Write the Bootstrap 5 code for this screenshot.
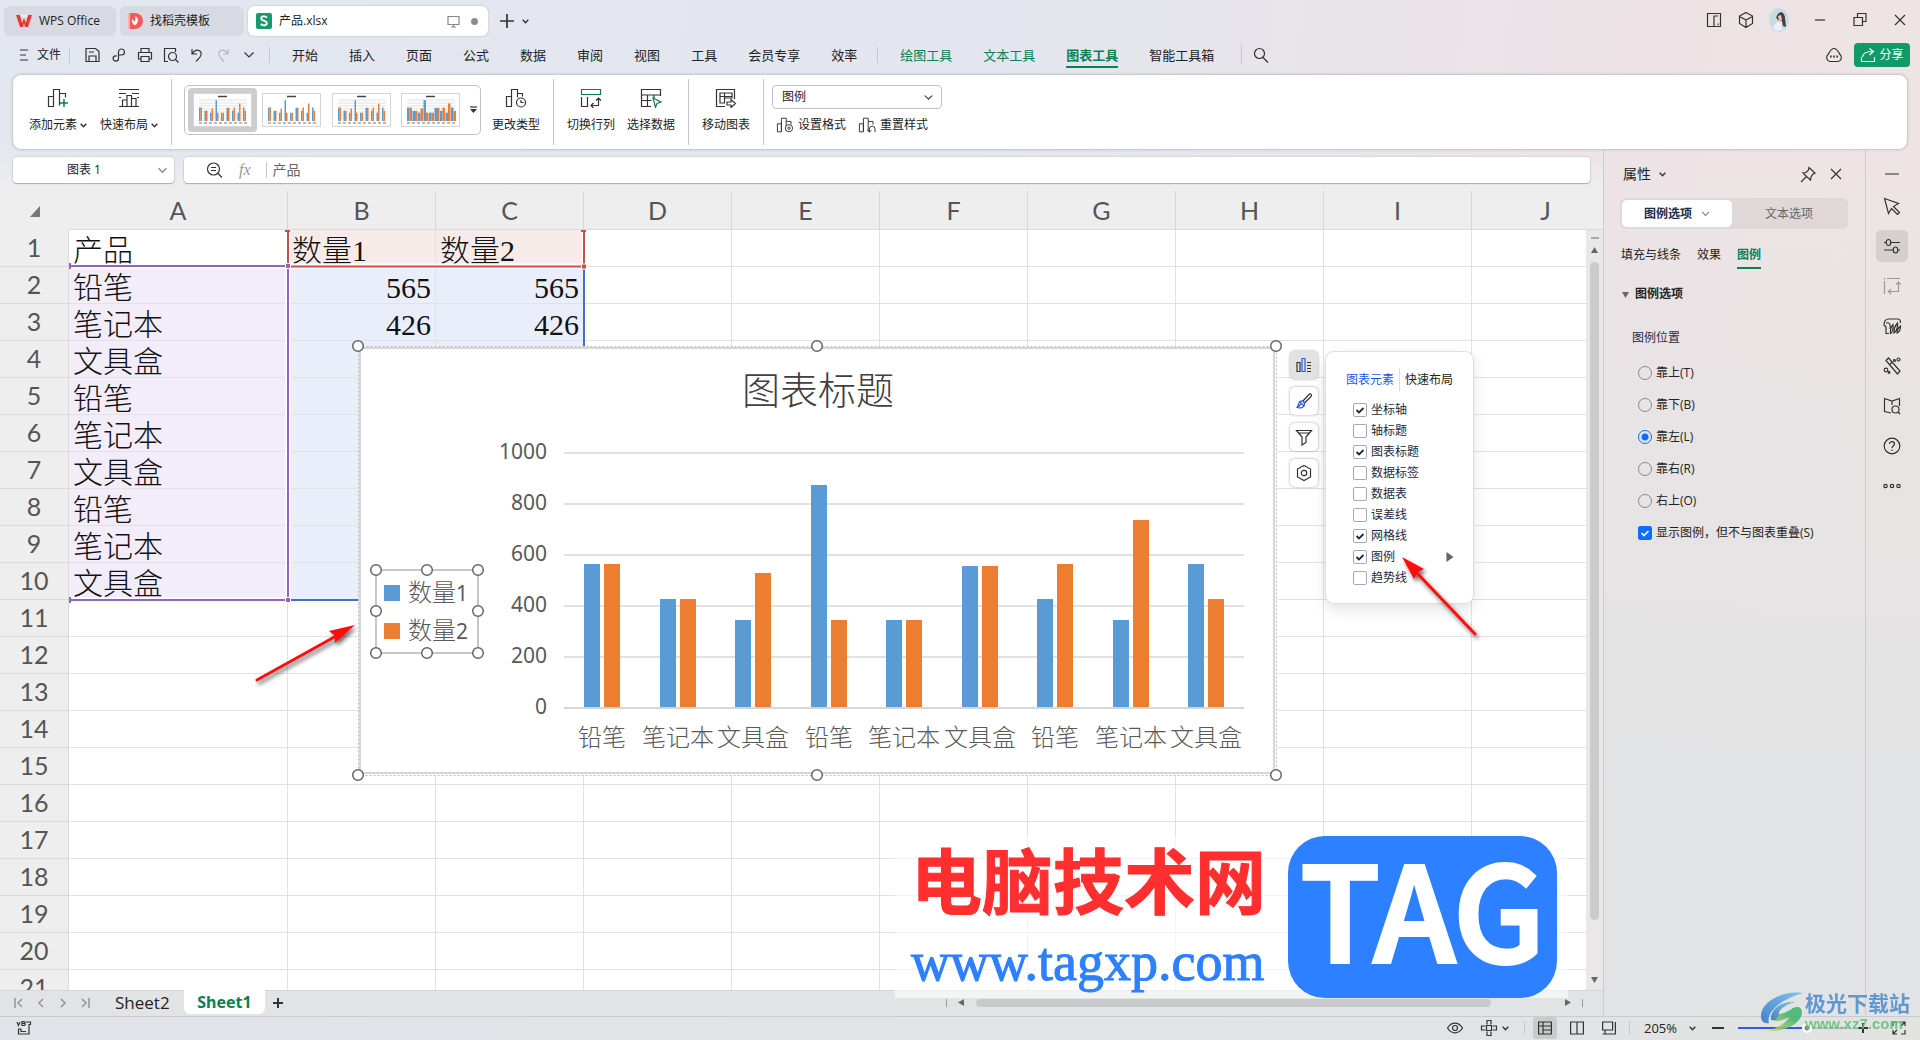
<!DOCTYPE html>
<html lang="zh-CN">
<head>
<meta charset="utf-8">
<meta name="viewport" content="width=device-width, initial-scale=1">
<title>产品.xlsx - WPS Office</title>
<link href="https://cdn.jsdelivr.net/npm/bootstrap@5.3.0/dist/css/bootstrap.min.css" rel="stylesheet">
<style>
  body{height:100vh;overflow:hidden;font-family:"Open Sans","Noto Sans CJK SC",sans-serif;font-size:12px;line-height:16px;color:#222;
    background:linear-gradient(180deg,rgba(226,227,228,0) 15%,#e2e3e4 75%),linear-gradient(95deg,#e3e7ef 0,#e3e6ee 50%,#ece3e7 78%,#eee4e3 100%)}
  button{border:0;background:none;padding:0;color:inherit;font:inherit;line-height:inherit}
  svg{display:block;fill:none;stroke:#333;stroke-width:1.2;flex:none}
  a{color:inherit;text-decoration:none}
  .ic{width:18px;height:18px}
  .caret{width:7px;height:5px;stroke-width:1.4}
  .grn{color:#0a8055}
  .vrule{width:1px;background:#c6c8cd;flex:none}

  .titlebar{height:38px;padding:6px 11px 0 4px;gap:4px}
  .doctab{height:30px;border-radius:6px;background:#d7dae2;padding:0 10px 0 12px;gap:7px}
  .doctab.on{background:#fff;box-shadow:0 0 2px #a9adb8}
  .t1{width:112px}.t2{width:124px}.t3{width:240px}
  .dotmark{width:7px;height:7px;border-radius:50%;background:#8d8d90}
  .face{width:20px;height:24px}
  .winctl{gap:22px;height:28px}
  .winapps{gap:14px}

  .menubar{height:37px;padding:0 10px 3px 19px}
  .quick{gap:8px}
  .tabs{gap:31px;font-size:13px;line-height:18px;padding-left:22px}
  .tabs .on{font-weight:700;border-bottom:2px solid #0a8055;padding-top:4px;padding-bottom:2px}
  .share{width:56px;height:24px;border-radius:4px;background:#0f9a68;color:#fff;gap:3px}
  .share svg{stroke:#fff}

  .ribbon{height:74px;margin:0 13px;background:#fff;border-radius:8px;box-shadow:0 0 3px rgba(90,95,110,.55);padding:4px 0}
  .tool{gap:9px;padding-top:9px;height:66px}
  .tool svg.big{width:22px;height:20px}
  .tool .lab{gap:3px}
  .split{margin:0 13px}
  .gallery{width:297px;height:50px;border:1px solid #bfc1c4;border-radius:5px;padding:2px 3px;gap:1px;margin:6px 11px 0 12px}
  .thumb{width:69px;height:44px;border-radius:4px}
  .thumb.on{background:#cdcdcd}
  .thumb svg{width:57px;height:32px;background:#fff;stroke:none;outline:1px solid #d5d5d5}
  .pick{width:170px;height:24px;font-size:12px;line-height:16px;padding:0 0 0 9px;border:1px solid #bfc1c4;border-radius:4px;background-size:9px;background-position:right 8px center;color:#222}

  .work{min-width:0}
  .fxrow{flex:none;height:42px;padding:8px 13px;gap:10px;background:linear-gradient(rgba(238,238,238,0),#eee)}
  .box{background:#fff;border-radius:4px;box-shadow:0 1px 1px #aab0b3,0 0 1px 1px #d3d6da}
  .namebox{width:161px;padding:0 6px 0 8px}
  .namebox input,.fx input{border:0;background:none;min-width:0;padding:0;outline:0}
  .namebox input{text-align:center;width:126px;color:#222}
  .fx{padding-left:21px}
  .fx input{font-size:14px;color:#666;padding-left:6px}
  .fxmark{font:italic 16px/20px "Liberation Serif",serif;color:#999}

  .sheet-table{table-layout:fixed;width:1620px;border-collapse:separate;border-spacing:0;background:#fff}
  .sheet-table th{font:400 25px/34px Lato,sans-serif;color:#555;background:#eee;text-align:center;padding:0 0 2px;border-right:1px solid #dadada;border-bottom:1px solid #dadada}
  .sheet-table thead th{height:39px;padding:0;border-right-color:#d6d6d6}
  .sheet-table thead th:first-child{border-color:transparent}
  .sheet-table td{height:37px;padding:6px 4px 0;border-right:1px solid #e1e2e2;border-bottom:1px solid #e1e2e2;font:300 30px/30px "Liberation Serif","Noto Sans CJK SC",serif;color:#111;white-space:nowrap}
  .ra{background:#f2edf8}.rb{background:#f7ebea}.rc{background:#e9eefa}
  .corner{width:11px;height:11px;margin:2px 0 0 30px;stroke:none;fill:#777}
  .viewport{min-width:0}
  .over{position:absolute;pointer-events:none;overflow:visible}
  .ranges{left:60px;top:30px}
  .plot{left:350px;top:148px}
  .plot text{stroke:none;fill:#595959;font-family:"Noto Sans","Noto Sans CJK SC",sans-serif;font-size:21px}
  .plot .cjk{font-size:24px;font-weight:300}
  .plot .ttl{font-size:38px;fill:#404040;font-weight:300}
  .knob{fill:#fff;stroke:#666;stroke-width:1.5}

  .side{position:absolute;left:1290px;top:160px;gap:8px}
  .side button{width:28px;height:28px;border-radius:5px;background:#fff;box-shadow:0 0 3px rgba(0,0,0,.35)}
  .side .on{background:#e2e2e2}
  .popup{position:absolute;left:1326px;top:161px;width:147px;height:251px;border-radius:8px;background:#fff;box-shadow:0 0 1px 1px #dcdcdc,0 6px 16px rgba(0,0,0,.12);padding:16px 0 0 20px}
  .pophead{gap:5px;height:24px}
  .poplist{padding:7px 0 0 7px}
  .poplist label{height:21px;gap:4px;color:#222a40}
  .poplist svg{width:10px;height:10px;margin:0 18px 0 auto}
  .tick{appearance:none;width:14px;height:14px;margin:0;border:1px solid #a5a8b0;border-radius:2px;background:#fff center/10px no-repeat}
  .tick:checked{background-image:url("data:image/svg+xml,%3Csvg xmlns='http://www.w3.org/2000/svg' viewBox='0 0 10 10'%3E%3Cpath d='M1.5 5l2.5 2.5 4.5-4.5' fill='none' stroke='%23222a40' stroke-width='1.8'/%3E%3C/svg%3E")}
  .tick.blue:checked{background-color:#0d6efd;border-color:#0d6efd;background-image:url("data:image/svg+xml,%3Csvg xmlns='http://www.w3.org/2000/svg' viewBox='0 0 10 10'%3E%3Cpath d='M1.5 5l2.5 2.5 4.5-4.5' fill='none' stroke='white' stroke-width='1.6'/%3E%3C/svg%3E")}

  .vscroll{width:17px;margin-top:39px;padding:7px 0;background:#e9e7e8}
  .headfill{position:absolute;right:0;top:0;width:17px;height:39px;background:#eee;border-bottom:1px solid #dadada}
  .vthumb{width:9px;height:658px;border-radius:5px;background:#cbcbcb;flex:0 1 658px}
  .tri{width:7px;height:7px;fill:#666;stroke:none}

  .sheetbar{flex:none;height:26px;border-top:1px solid #d3d5d7;padding:0 0 2px 14px}
  .sheetbar .nav4{gap:12px;width:101px}
  .sheetbar .nav4 svg{width:10px;height:12px;stroke:#999;stroke-width:1.6}
  .stab{font-size:17px;line-height:22px;width:69px;text-align:left}
  .stab.on{width:81px;height:24px;text-align:center;background:#fff;border-radius:0 0 6px 6px;margin-top:-1px;font-weight:700;font-family:"Noto Sans",sans-serif;font-size:16px}
  .hscroll{width:637px;gap:11px;margin-right:20px}
  .hscroll .vrule{height:8px;background:#999}
  .hthumb{height:8px;border-radius:4px;background:#c8cacb;width:515px}

  .panel{width:262px;border-left:1px solid #cfcbcd;padding:15px 17px 0 16px}
  .seg{height:31px;border-radius:6px;background:#e0d8d8;padding:2px;margin-top:14px}
  .seg button{flex:1}
  .seg .on{flex:0 0 110px;background:#fff;border-radius:5px;font-weight:700;color:#222a45;gap:9px}
  .ptabs{gap:16px;margin-top:18px;padding-left:1px}
  .ptabs .on{font-weight:700;border-bottom:2px solid #0a8055;height:22px}
  .radios{gap:16px;padding:19px 0 0 18px}
  .radios label{gap:4px;height:16px}
  .radios input[type=radio]{appearance:none;width:14px;height:14px;margin:0;border:1px solid #888;border-radius:50%}
  .radios input[type=radio]:checked{border-color:#0d6efd;background:radial-gradient(#0d6efd 3px,transparent 4px)}
  .rail{width:55px;border-left:1px solid #cfcbcd;padding:24px 2px 0 0}
  .rail button{width:32px;height:32px;border-radius:5px;margin-bottom:8px}
  .rail .on{background:#d6cfcf}
  .railbar{width:14px;height:2px;background:#888;margin-bottom:15px;flex:none}

  .statusbar{flex:none;height:24px;border-top:1px solid #c9cbcd;padding:0 14px 1px 16px;background:linear-gradient(90deg,#e2e4ea,#e1e3e5 75%,#e2e2e1)}
  .st{width:24px;height:22px;border-radius:3px}
  .st.on{background:#c9cbcb}
  .statusbar .vrule{height:14px}
  .zoomer{appearance:none;width:113px;height:14px;background:linear-gradient(90deg,#2e5be0 70px,#b9bbbd 70px) center/100% 2px no-repeat}
  .zoomer::-webkit-slider-thumb{appearance:none;width:10px;height:10px;border-radius:50%;background:radial-gradient(#888 2px,#fff 3px)}

  .tagmark{position:absolute;left:895px;bottom:18px;width:673px;height:162px;background:rgba(255,255,255,.6);padding-left:16px;padding-right:11px}
  .tagred{font:700 71px/82px "Noto Sans CJK SC",sans-serif;color:#ff2f2f;-webkit-text-stroke:1px #ff2f2f}
  .tagurl{font:400 54px/60px "Liberation Serif",serif;color:#2d80ff;-webkit-text-stroke:1px #2d80ff;margin-top:14px}
  .tagbox{width:269px;height:162px;border-radius:37px;background:#2d80ff;color:#fff;font:500 130px/138px "Noto Sans CJK SC",sans-serif;-webkit-text-stroke:4px #fff;text-align:center}
  .xzmark{position:absolute;right:10px;bottom:7px;gap:2px;opacity:.85}
  .xz1{font:700 21px/25px "Noto Sans CJK SC",sans-serif;color:#4a8cd0}
  .xz2{font:700 15px/18px "Liberation Sans",sans-serif;color:#5fbf7a}
</style>
<script src="https://cdn.jsdelivr.net/npm/bootstrap@5.3.0/dist/js/bootstrap.bundle.min.js"></script>
</head>
<body class="d-flex flex-column position-relative">
<svg width="0" height="0" class="position-absolute">
  <symbol id="down" viewBox="0 0 7 5"><path d="M.7.8l2.8 3 2.8-3"/></symbol>
  <symbol id="x" viewBox="0 0 18 18"><path d="M4 4l10 10M14 4L4 14"/></symbol>
  <symbol id="bars" viewBox="0 0 22 20"><path d="M1.500 8.500h5v10h-5zM6.500 18V1.500h6v16M12.500 5.500h6v4"/></symbol>
</svg>

<header class="flex-shrink-0">
  <div class="titlebar d-flex align-items-start">
    <button class="doctab t1 d-flex align-items-center"><svg width="16" height="14" viewBox="0 0 16 14"><path fill="#e8392c" stroke="none" d="M0 1h4l2 8 2-5 2 5 2-8h4l-4 12h-3L8 9l-1 4H4z"/><path fill="#fff" stroke="none" d="M4 1h8l-.6 2H5.200z" opacity=".6"/></svg>WPS Office</button>
    <button class="doctab t2 d-flex align-items-center ps-2"><svg width="15" height="16" viewBox="0 0 15 16"><path d="M0 0h7a8 8 0 0 1 0 16H0z" fill="#f15b5b" stroke="none"/><path d="M0 0h2v16H0z" fill="#ffaea8" stroke="none"/><path d="M7.500 3c3 3 3 5 1 8-1 2-3 1-4-1-1-2-.5-3 0-4l2 3c1-2 1-4 1-6z" fill="#fff" stroke="none"/></svg>找稻壳模板</button>
    <div class="doctab t3 on d-flex align-items-center ps-2"><svg width="16" height="16" viewBox="0 0 16 16"><rect width="16" height="16" rx="2" fill="#169a69" stroke="none"/><path d="M11 4.600C9 2.800 5 3 5.200 5.600c.2 2.600 5.600 1.600 5.600 4.600 0 2.500-4 2.700-6.100.8" stroke="#fff" stroke-width="1.800"/></svg><span>产品.xlsx</span>
      <svg class="ms-auto" width="13" height="13" viewBox="0 0 13 13" style="stroke:#888"><path d="M1 1.500h11v8H1zM4 12h5M6.500 10v2"/></svg><span class="dotmark ms-1"></span></div>
    <div class="d-flex align-items-center gap-2 ps-2" style="height:30px"><button aria-label="新建"><svg width="14" height="14" viewBox="0 0 14 14"><path d="M7 0v14M0 7h14" stroke-width="1.700"/></svg></button><svg class="caret"><use href="#down"/></svg></div>
    <div class="winctl d-flex align-items-center ms-auto">
      <div class="winapps d-flex align-items-center">
      <svg class="ic" viewBox="0 0 18 18"><path d="M2.500 2.500h13v13h-13zM9 15V5h4M9 5h3.500v0M13 12.500V14"/></svg>
      <svg class="ic" viewBox="0 0 18 18"><path d="M9 1.500l6.500 3.500v7.500L9 16.500l-6.500-4V5zM2.500 5.500L9 9l6.500-3.500M9 9v7"/></svg>
      <svg class="face" viewBox="0 0 20 24"><g stroke="none"><ellipse cx="10" cy="12" rx="10" ry="12" fill="#c9dce6"/><path d="M9 6c3-4 7-1 7 4l1 9-3-1-1-5-4-1c-3-2-1-5 0-6z" fill="#4a3b42"/><path d="M9 8l3-1 1 5-3 1z" fill="#ecc3b4"/><path d="M4 20c2-6 6-7 8-5l1 7-5 1z" fill="#e9f3f6"/></g></svg>
      </div>
      <button aria-label="最小化"><svg class="ic" viewBox="0 0 18 18"><path d="M4 9h10"/></svg></button>
      <button aria-label="还原"><svg class="ic" viewBox="0 0 18 18"><path d="M3 6.500h8.500v8H3zM6.500 6.500v-4H15v8h-3.500"/></svg></button>
      <button aria-label="关闭"><svg class="ic"><use href="#x"/></svg></button>
    </div>
  </div>

  <div class="menubar d-flex align-items-center">
    <button class="d-flex align-items-center gap-2"><svg width="10" height="12" viewBox="0 0 10 12"><path d="M1 1h8M1 6h6M1 11h8"/></svg>文件</button>
    <span class="vrule ms-2 me-2 align-self-center" style="height:16px"></span>
    <div class="quick d-flex align-items-center" style="padding-left:6px">
      <svg class="ic" viewBox="0 0 18 18"><path d="M2 2.500h9.500l3.500 3V15.500H2zM5 15v-5h7v5M5 6h5"/></svg>
      <svg class="ic" viewBox="0 0 18 18"><path d="M8 9h3.500a3 3 0 1 0-3-3v6.500a2.700 2.700 0 1 1-2.700-2.700h1"/></svg>
      <svg class="ic" viewBox="0 0 18 18"><path d="M5 6V2.500h8V6M5 13H2.500V6.500h13V13H13M5 10.500h8v5H5z"/></svg>
      <svg class="ic" viewBox="0 0 18 18"><path d="M6 15.500H2.500v-13h11V6"/><circle cx="10.500" cy="10.500" r="4"/><path d="M13.500 13.500l3 3"/></svg>
      <svg class="ic" viewBox="0 0 18 18"><path d="M4 3v5h5M4.500 7.500C8 2 14 4 13 9c-.5 2.500-3 4-5 6.500"/></svg>
      <svg class="ic" viewBox="0 0 18 18" style="stroke:#b5b8be"><path d="M14 3v5H9M13.500 7.500C10 2 4 4 5 9c.5 2.500 3 4 5 6.500"/></svg>
      <svg class="ic" viewBox="0 0 18 18"><path d="M4.500 6.500L9 11l4.500-4.500"/></svg>
    </div>
    <span class="vrule" style="height:16px;margin-left:11px"></span>
    <nav class="tabs d-flex align-items-center">
      <a href="#">开始</a><a href="#">插入</a><a href="#">页面</a><a href="#">公式</a><a href="#">数据</a><a href="#">审阅</a><a href="#">视图</a><a href="#">工具</a><a href="#">会员专享</a><a href="#">效率</a>
    </nav>
    <span class="vrule" style="height:16px;margin-left:20px"></span>
    <nav class="tabs d-flex align-items-center"><a href="#" class="grn">绘图工具</a><a href="#" class="grn">文本工具</a><a href="#" class="grn on">图表工具</a><a href="#">智能工具箱</a></nav>
    <span class="vrule" style="height:20px;margin-left:27px"></span>
    <svg class="ic" viewBox="0 0 18 18" style="margin-left:9px"><circle cx="8.500" cy="7.500" r="5"/><path d="M12 11.500l5 5"/></svg>
    <svg class="ic ms-auto" viewBox="0 0 18 18" style="margin-right:11px"><path d="M5 15.500a4 4 0 0 1-2-7C4.500 6 6 2.500 9 2.500s4.500 3.500 6 6a4 4 0 0 1-2 7z"/><path d="M5 10.500h1.600M8.200 10.500h1.600M11.400 10.500H13" stroke-width="2"/></svg>
    <button class="share d-flex align-items-center justify-content-center"><svg width="16" height="16" viewBox="0 0 16 16"><path d="M1.500 10v4.500h13V10M2.500 10C3 6 6 4.500 12 4.500M9.500 1.500l4 3-4 3.500"/></svg>分享</button>
  </div>

  <div class="ribbon d-flex align-items-start">
    <button class="tool d-flex flex-column align-items-center" style="margin-left:16px"><svg class="big" viewBox="0 0 22 20"><path d="M1.500 8.500h5v10h-5zM6.500 18V1.500h6v16M12.500 5.500h6v4"/><path d="M17 11v8M13 15h8" stroke="#0a8055" stroke-width="1.500"/></svg><span class="lab d-flex align-items-center">添加元素<svg class="caret"><use href="#down"/></svg></span></button>
    <button class="tool d-flex flex-column align-items-center" style="margin-left:13px"><svg class="big" viewBox="0 0 22 20"><path d="M1 1.500h20M1 5.500h7M14 5.500h7M1 18.500h20M1 9.500h2M19 9.500h2M4.500 18v-6h4.500v6M9 18V7.500h4.500V18M13.500 10.500H18V18"/></svg><span class="lab d-flex align-items-center">快速布局<svg class="caret"><use href="#down"/></svg></span></button>
    <span class="vrule align-self-stretch" style="margin-left:13px"></span>
    <div class="gallery d-flex align-items-center" id="gallery"></div>
    <button class="tool d-flex flex-column align-items-center"><svg class="big" viewBox="0 0 22 20"><path d="M1.500 8.500h5v10h-5zM6.500 18V1.500h6v8M12.500 5.500h5v3"/><circle cx="16" cy="14.500" r="4.500"/><path d="M16 12v2.500h2.500"/></svg>更改类型</button>
    <span class="vrule align-self-stretch split"></span>
    <button class="tool d-flex flex-column align-items-center"><svg class="big" viewBox="0 0 22 20"><path d="M1.500 1.500h19v5h-19z" stroke="#0a8055"/><path d="M1.500 9v9.500h6V9M18.500 10v7.500h-7M16 12.500l2.500-2.500 2.500 2.500M13.500 15l-2.500 2.500 2.500 2.500"/></svg>切换行列</button>
    <button class="tool d-flex flex-column align-items-center" style="margin-left:12px"><svg class="big" viewBox="0 0 22 20"><path d="M11 18.500H1.500v-17h19V8M1.500 7h19M1.500 12.500h10M7.500 7v11.500M14 7v3"/><path d="M13 10l8 4-4 1.500-1.500 4z" stroke="#0a8055"/></svg>选择数据</button>
    <span class="vrule align-self-stretch split"></span>
    <button class="tool d-flex flex-column align-items-center"><svg class="big" viewBox="0 0 22 20"><path d="M10 18.500H1.500v-17h18V11M5 15V5h12v5H9.500v5zM5 8.500h12M9.500 5v5"/><path d="M12 14h4v-2.500l4.500 4-4.500 4V17h-4z" fill="#fff"/></svg>移动图表</button>
    <span class="vrule align-self-stretch" style="margin:0 8px 0 13px"></span>
    <div class="d-flex flex-column" style="padding-top:6px;gap:8px">
      <select class="form-select pick" aria-label="图表元素"><option>图例</option></select>
      <div class="d-flex ps-1" style="gap:12px">
        <button class="d-flex align-items-center gap-1"><svg width="18" height="16" viewBox="0 0 22 20"><use href="#bars"/><circle cx="16" cy="14" r="4.500" fill="#fff"/><circle cx="16" cy="14" r="1.500"/></svg>设置格式</button>
        <button class="d-flex align-items-center gap-1"><svg width="18" height="16" viewBox="0 0 22 20"><use href="#bars"/><path d="M14 19v-4a3.500 3.500 0 0 1 7 0v4M11.500 16.500L14 19l2.500-2.500"/></svg>重置样式</button>
      </div>
    </div>
  </div>
</header>

<main class="d-flex flex-grow-1" style="min-height:0">
  <section class="work d-flex flex-column flex-grow-1 position-relative">
    <div class="fxrow d-flex">
      <div class="box namebox d-flex align-items-center"><input value="图表 1" aria-label="名称框"><svg class="ms-auto" width="11" height="7" viewBox="0 0 7 5" style="stroke:#777;stroke-width:.8"><use href="#down"/></svg></div>
      <div class="box fx d-flex align-items-center flex-grow-1"><svg class="ic" viewBox="0 0 18 18"><circle cx="8.500" cy="8" r="6"/><path d="M13 12.500l4 4M6 6.500h5M6 9.500h5"/></svg><span class="fxmark ms-3" style="margin-right:15px">fx</span><span class="vrule" style="height:16px"></span><input class="flex-grow-1" value="产品" aria-label="编辑栏"></div>
    </div>
    <div class="d-flex flex-grow-1 position-relative" style="min-height:0">
      <div class="viewport flex-grow-1 overflow-hidden position-relative">
        <table class="sheet-table">
          <colgroup><col style="width:69px"><col style="width:219px"><col span="9" style="width:148px"></colgroup>
          <thead><tr id="cols"></tr></thead>
          <tbody id="rows"></tbody>
        </table>
        <svg class="over ranges" width="540" height="390" viewBox="60 221 540 390" id="ranges">
          <g fill="none" stroke-width="2">
            <path d="M584 267V600H288" stroke="#466cc9"/>
            <path d="M69 266H288V600H69" stroke="#fff" stroke-width="5"/><path d="M288 230V266H584V230" stroke="#fff" stroke-width="5"/>
            <path d="M288 231V266.500H584V231" stroke="#c4504e"/>
            <path d="M70 266H288V600H70" stroke="#9264be"/>
          </g>
          <g stroke="#fff" stroke-width="1"><path d="M285.500 263.500h5v5h-5zM285.500 597.500h5v5h-5z" fill="#9264be"/><path d="M581.500 264h5v5h-5z" fill="#c4504e"/></g>
          <path d="M285 231h5M581 231h5" stroke="#c4504e" stroke-width="2"/><path d="M70 263v6M70 597v6" stroke="#9264be" stroke-width="2"/>
        </svg>
        <svg class="over plot" width="935" height="446" viewBox="350 339 935 446" id="plot" role="img" aria-label="图表标题"></svg>
        <svg class="over" style="left:250px;top:425px" width="115" height="80" viewBox="250 616 115 80">
          <defs><filter id="sh" x="-20%" y="-20%" width="140%" height="140%"><feDropShadow dx="2" dy="3" stdDeviation="2" flood-opacity=".6"/></filter></defs>
          <g filter="url(#sh)"><path d="M257 680L338 635" stroke="#f11" stroke-width="3" stroke-linecap="round"/><path d="M355 625l-20 18v-7l-6-5z" fill="#f11" stroke="none"/></g>
        </svg>
        <div class="side d-flex flex-column">
          <button class="on d-flex align-items-center justify-content-center"><svg class="ic" viewBox="0 0 18 18"><path d="M2 6.500h3v9H2zM12 6.500h4M12 9.500h4M12 12.500h4M12 15.500h4"/><path d="M7 2.500h3v13H7z" stroke="#2e5be0"/></svg></button>
          <button class="d-flex align-items-center justify-content-center"><svg class="ic" viewBox="0 0 18 18"><path d="M8 9l6-6.500c1.500-1.500 3.500.5 2 2L9.500 11z"/><path d="M8 9c-3-.5-4 1-4.500 3.500L2 15.500c3 1 8 .5 7.500-4.500zM7 11l-4 4M5 10l4 4" stroke="#2e5be0"/></svg></button>
          <button class="d-flex align-items-center justify-content-center"><svg class="ic" viewBox="0 0 18 18"><path d="M1.500 2.500h15L11 9v5.500L7 17V9zM4 5h10"/></svg></button>
          <button class="d-flex align-items-center justify-content-center"><svg class="ic" viewBox="0 0 18 18"><path d="M9 1.500L15.500 5v8L9 16.500 2.500 13V5z"/><circle cx="9" cy="9" r="2.700"/></svg></button>
        </div>
        <div class="popup">
          <div class="pophead d-flex align-items-center"><a href="#" style="color:#2456e6">图表元素</a><span class="vrule align-self-stretch" style="background:#ddd"></span><a href="#">快速布局</a></div>
          <div class="poplist" id="poplist"></div>
        </div>
        <svg class="over" style="left:1390px;top:355px" width="100" height="100" viewBox="1390 546 100 100">
          <g filter="url(#sh)"><path d="M1475 634L1416 572" stroke="#f11" stroke-width="3" stroke-linecap="round"/><path d="M1402 557l22 12-6 3-4 7z" fill="#f11" stroke="none"/></g>
        </svg>
      </div>
      <div class="headfill"></div>
      <div class="vscroll d-flex flex-column align-items-center gap-2"><span style="width:8px;height:2px;background:#aaa"></span><svg class="tri" viewBox="0 0 7 7"><path d="M0 6l3.500-6L7 6z"/></svg><span class="vthumb"></span><svg class="tri mt-auto" viewBox="0 0 7 7"><path d="M0 1l3.500 6L7 1z"/></svg></div>
    </div>
    <div class="sheetbar d-flex align-items-center">
      <div class="nav4 d-flex"><svg viewBox="0 0 10 12"><path d="M1 1v10M8 2L4 6l4 4"/></svg><svg viewBox="0 0 10 12"><path d="M7 2L3 6l4 4"/></svg><svg viewBox="0 0 10 12"><path d="M3 2l4 4-4 4"/></svg><svg viewBox="0 0 10 12"><path d="M2 2l4 4-4 4M9 1v10"/></svg></div>
      <button class="stab">Sheet2</button><button class="stab on grn">Sheet1</button>
      <button class="ms-2" aria-label="新建工作表"><svg width="10" height="10" viewBox="0 0 10 10" style="stroke-width:2"><path d="M5 0v10M0 5h10"/></svg></button>
      <div class="hscroll d-flex align-items-center ms-auto"><span class="vrule"></span><svg class="tri" viewBox="0 0 7 7"><path d="M6 0v7L0 3.500z"/></svg><span class="hthumb"></span><svg class="tri ms-auto" viewBox="0 0 7 7"><path d="M1 0v7l6-3.500z"/></svg><span class="vrule"></span></div>
    </div>
    <div class="tagmark d-flex justify-content-between">
      <div class="d-flex flex-column"><span class="tagred">电脑技术网</span><span class="tagurl">www.tagxp.com</span></div>
      <div class="tagbox">TAG</div>
    </div>
  </section>

  <aside class="panel flex-shrink-0">
    <div class="d-flex align-items-center" style="padding:0 3px"><span style="font-size:14px;line-height:20px">属性</span><svg class="caret ms-2"><use href="#down"/></svg>
      <button class="ms-auto" aria-label="固定"><svg class="ic" viewBox="0 0 18 18"><path d="M10 2.500l6 5.500-2 1-2 3-.5 3-4-3.500-3.500-3.500 3-.5 2.500-2.500zM7 12l-5 5"/></svg></button><button aria-label="关闭" style="margin-left:10px"><svg class="ic"><use href="#x"/></svg></button></div>
    <div class="seg d-flex"><button class="on d-flex align-items-center justify-content-center">图例选项<svg width="9" height="6" viewBox="0 0 7 5" style="stroke:#777;stroke-width:.9"><use href="#down"/></svg></button><button style="color:#666">文本选项</button></div>
    <nav class="ptabs d-flex"><a href="#">填充与线条</a><a href="#">效果</a><a href="#" class="on grn">图例</a></nav>
    <div class="d-flex align-items-center fw-bold" style="margin-top:17px;padding-left:2px;gap:6px"><svg class="tri" viewBox="0 0 7 7"><path d="M0 1l3.500 6L7 1z"/></svg>图例选项</div>
    <div style="padding:28px 0 0 12px;color:#252c4a">图例位置</div>
    <div class="radios d-flex flex-column">
      <label class="d-flex align-items-center"><input type="radio" name="pos">靠上(T)</label>
      <label class="d-flex align-items-center"><input type="radio" name="pos">靠下(B)</label>
      <label class="d-flex align-items-center"><input type="radio" name="pos" checked>靠左(L)</label>
      <label class="d-flex align-items-center"><input type="radio" name="pos">靠右(R)</label>
      <label class="d-flex align-items-center"><input type="radio" name="pos">右上(O)</label>
      <label class="d-flex align-items-center"><input type="checkbox" class="tick blue" checked>显示图例，但不与图表重叠(S)</label>
    </div>
  </aside>

  <aside class="rail flex-shrink-0 d-flex flex-column align-items-center">
    <span class="railbar"></span>
    <button class="d-flex align-items-center justify-content-center"><svg class="ic" viewBox="0 0 18 18"><path d="M1.500 1.500l14 5-5 3 6 6-2 2-6-6-3 5z"/></svg></button>
    <button class="on d-flex align-items-center justify-content-center"><svg class="ic" viewBox="0 0 18 18"><path d="M1 5.500h2M8 5.500h9M1 13h9M15 13h2"/><ellipse cx="5.500" cy="5.500" rx="2.300" ry="3"/><ellipse cx="12.500" cy="13" rx="2.300" ry="3"/></svg></button>
    <button class="d-flex align-items-center justify-content-center"><svg class="ic" viewBox="0 0 18 18" style="stroke:#999"><path d="M1.500 1v1.500M4 1.500h13M1.500 4v13M15.500 5v9.500H6M13 7.500L15.500 5 18 7.500M8 12l-2.500 2.500L8 17"/></svg></button>
    <button class="d-flex align-items-center justify-content-center"><svg class="ic" viewBox="0 0 18 18"><path d="M6 16.500H3V10L1 8c0-4 2-6 5-6h9c2 0 2.500 2 2.500 4"/><path d="M3 6c3-1 5 1 4 6M7.500 16.500c2-.5 3-6 2.500-9-2 2-3 5-2.500 9zM11 16c-.5-4 1-7 3.500-10 .5 5-1 8-3.500 10zM14 16c0-3 1-5 3.500-7 0 4-1 6-3.500 7z"/></svg></button>
    <button class="d-flex align-items-center justify-content-center"><svg class="ic" viewBox="0 0 18 18"><path d="M3 3.500L5.500 1 17 14l-2.500 3zM6 8l3-2.500"/><circle cx="15.500" cy="2.500" r="1.500"/><circle cx="11.500" cy="3.500" r="1"/><circle cx="3" cy="13" r="1.800"/><circle cx="6" cy="15.500" r=".8"/></svg></button>
    <button class="d-flex align-items-center justify-content-center"><svg class="ic" viewBox="0 0 18 18"><path d="M8 16L1.500 14.500V1.500L9 4l7.500-2.500V9M9 4v4"/><circle cx="12.500" cy="12.500" r="3.500"/><path d="M15 15l2 2"/></svg></button>
    <button class="d-flex align-items-center justify-content-center"><svg class="ic" viewBox="0 0 18 18"><circle cx="9" cy="9" r="7.800"/><path d="M6.500 7c0-3.500 5-3 5 0 0 1.500-2.500 2-2.500 4M9 12.500V14"/></svg></button>
    <button class="d-flex align-items-center justify-content-center"><svg class="ic" viewBox="0 0 18 18"><circle cx="2.500" cy="9" r="1.700"/><circle cx="9" cy="9" r="1.700"/><circle cx="15.500" cy="9" r="1.700"/></svg></button>
  </aside>
</main>

<footer class="statusbar d-flex align-items-center">
  <svg width="16" height="14" viewBox="0 0 16 14"><path d="M1 1l1.500 3.500L4 1M6 .7h2c1.500 0 1.500 1.800 0 1.800H6zM6 2.500h2.500c1 0 1 2-.5 2H6zM10 1h4.500v2.500H13V13H2.500V8h2.500v2.500h5"/></svg>
  <div class="d-flex align-items-center ms-auto">
    <svg class="ic" viewBox="0 0 18 18"><path d="M1.500 9c4-6.500 11-6.500 15 0-4 6.500-11 6.500-15 0z"/><circle cx="9" cy="9" r="2.500"/></svg>
    <svg class="ic" viewBox="0 0 18 18" style="margin:0 4px 0 16px"><path d="M7 5.500v-4h4v4M7 12.500v4h4v-4M5.500 7h-4v4h4M12.500 7h4v4h-4"/><path d="M6.500 6.500h5v5h-5z"/></svg><svg class="caret"><use href="#down"/></svg>
    <span class="vrule" style="margin:0 8px 0 15px"></span>
    <button class="st on d-flex align-items-center justify-content-center"><svg width="14" height="14" viewBox="0 0 14 14"><path d="M.6 1h12.800v12H.6zM.6 5h12.800M5 1v12M5 9h8"/></svg></button>
    <button class="st d-flex align-items-center justify-content-center ms-2"><svg width="14" height="14" viewBox="0 0 14 14"><path d="M.6 1h12.800v12H.6zM7 1v12"/></svg></button>
    <button class="st d-flex align-items-center justify-content-center ms-2"><svg width="14" height="14" viewBox="0 0 14 14"><path d="M.6 1h10v8H.6zM13.400 1v12H.6M3 9v4"/></svg></button>
    <span class="vrule ms-2"></span>
    <label for="zoom" style="font-size:13px;margin:0 12px 0 14px">205%</label><svg class="caret"><use href="#down"/></svg>
    <span style="width:12px;height:2px;background:#333;margin:0 14px 0 16px"></span>
    <input id="zoom" class="zoomer" type="range" min="0" max="100" value="62">
    <svg width="10" height="10" viewBox="0 0 10 10" style="margin:0 24px 0 7px;stroke-width:2"><path d="M5 0v10M0 5h10"/></svg>
    <svg width="14" height="14" viewBox="0 0 14 14"><path d="M5 1H1v4M9 1h4v4M5 13H1V9M13 9v4H9M1 13l4-4M13 1L9 5"/></svg>
  </div>
</footer>
<div class="xzmark d-flex align-items-center">
  <svg width="42" height="40" viewBox="0 0 42 40"><defs><linearGradient id="g1" x1="0" y1="1" x2="1" y2="0"><stop offset="0" stop-color="#2f6fc4"/><stop offset="1" stop-color="#6cc3ee"/></linearGradient><linearGradient id="g2" x1="0" y1="1" x2="1" y2="0"><stop offset="0" stop-color="#e8e04a"/><stop offset=".6" stop-color="#38b36b"/></linearGradient></defs><path d="M42 1C22-2 2 9 0 22c-1 7 3 10 8 9-3-9 9-23 34-30z" fill="url(#g1)" stroke="none"/><path d="M10 28C9 18 20 9 34 10c-11 3-17 8-16 12 7-1 11-4 14-6 5-2 9-1 9 5C40 32 22 41 4 39c12-2 21-8 24-14-6 4-12 5-18 3z" fill="url(#g2)" stroke="none"/><path d="M10 28C9 18 20 9 34 10c-11 3-17 8-16 12l-3 6z" fill="url(#g1)" stroke="none"/></svg>
  <div class="d-flex flex-column"><span class="xz1">极光下载站</span><span class="xz2">www.xz7.com</span></div>
</div>

<script>
  const products = ['铅笔','笔记本','文具盒','铅笔','笔记本','文具盒','铅笔','笔记本','文具盒'];
  const qty1 = [565,426,347,873,347,555,426,347,565];
  const qty2 = [565,426,528,347,347,555,565,737,426];

  // Worksheet
  cols.innerHTML = '<th><svg class="corner" viewBox="0 0 11 11"><path d="M10 0v10q0 1-1 1H0z"/></svg></th>' + [...'ABCDEFGHIJ'].map(c => `<th>${c}</th>`).join('');
  let html = '';
  for (let r = 1; r <= 21; r++) {
    let cells = ['产品','数量1','数量2'], cls = ['','rb','rb'];
    if (r > 1) { cells = [products[r-2] || '', qty1[r-2] ?? '', qty2[r-2] ?? '']; cls = r <= 10 ? ['ra','rc text-end','rc text-end'] : ['','','']; }
    if (r > 3) cells[1] = cells[2] = '';
    html += `<tr><th>${r}</th>${cells.map((v,i) => `<td class="${cls[i]}">${v}</td>`).join('')}${'<td></td>'.repeat(7)}</tr>`;
  }
  rows.innerHTML = html;

  // Chart
  const base = 708, k = .255;
  let s = '<rect x="358.500" y="346.500" width="918" height="429" fill="#fff" stroke="#bbb" stroke-width="1" stroke-dasharray="2 2"/><rect x="360" y="348" width="914" height="425" fill="#fff" stroke="#d6d6d6" stroke-width="2"/>';
  s += '<text class="ttl" x="818" y="404" text-anchor="middle">图表标题</text>';
  for (let v = 0; v <= 1000; v += 200) {
    const y = base - v * k;
    s += `<path d="M564 ${y}H1244" stroke="${v ? '#e1e1e1' : '#d6d6d6'}" stroke-width="2"/><text x="547" y="${y + 6}" text-anchor="end">${v}</text>`;
  }
  products.forEach((p, i) => {
    const x = Math.round(584 + i * 75.5);
    const h1 = Math.round(qty1[i] * k), h2 = Math.round(qty2[i] * k);
    s += `<rect x="${x}" y="${base - h1}" width="16" height="${h1 - 1}" fill="#5b9bd5" stroke="none"/><rect x="${x + 20}" y="${base - h2}" width="16" height="${h2 - 1}" fill="#ed7d31" stroke="none"/>`;
    s += `<text class="cjk" x="${x + 18}" y="746" text-anchor="middle">${p}</text>`;
  });
  s += '<rect x="376" y="570" width="102" height="83" stroke="#b5b5b8" stroke-width="1.500"/>';
  s += '<rect x="384" y="585" width="16" height="16" fill="#5b9bd5" stroke="none"/><rect x="384" y="623" width="16" height="16" fill="#ed7d31" stroke="none"/>';
  s += '<text class="cjk" x="408" y="601">数量<tspan font-weight="400" font-size="21">1</tspan></text><text class="cjk" x="408" y="639">数量<tspan font-weight="400" font-size="21">2</tspan></text>';
  const knob = (x, y) => s += `<circle class="knob" cx="${x}" cy="${y}" r="5.300"/>`;
  [358,817,1276].forEach(x => { knob(x, 346); knob(x, 775); });
  [376,427,478].forEach(x => { knob(x, 570); knob(x, 653); });
  knob(376, 611); knob(478, 611);
  plot.innerHTML = s;

  // Chart element list
  poplist.innerHTML = [['坐标轴',1],['轴标题',0],['图表标题',1],['数据标签',0],['数据表',0],['误差线',0],['网格线',1],['图例',1],['趋势线',0]]
    .map(([t, on]) => `<label class="d-flex align-items-center"><input class="tick" type="checkbox" ${on ? 'checked' : ''}>${t}${t === '图例' ? '<svg class="tri" viewBox="0 0 7 7"><path d="M1 0v7l5-3.500z"/></svg>' : ''}</label>`).join('');

  // Ribbon style previews
  let g = '';
  for (let t = 0; t < 4; t++) {
    let m = '<path d="M24 2.500h9" stroke="#444" stroke-width="1.500"/>';
    if (t !== 1) for (let y = 6; y < 27; y += 3) m += `<path d="M5 ${y}h48" stroke="#e2e2e2"/>`;
    products.forEach((p, i) => {
      const x = 5 + i * 5.5, a = qty1[i] / 42, b = qty2[i] / 42, w = t === 3 ? 2.5 : 1.5;
      m += `<path d="M${x} 27h${w}v${-a}h${-w}z" fill="#5b9bd5"/><path d="M${x + w} 27h${w}v${-b}h${-w}z" fill="#ed7d31"/>`;
    });
    m += '<path d="M5 29h48" stroke="#777" stroke-dasharray="3 2"/>';
    g += `<button class="thumb ${t ? '' : 'on'} d-flex align-items-center justify-content-center" aria-label="样式 ${t + 1}"><svg viewBox="0 0 57 32">${m}</svg></button>`;
  }
  gallery.innerHTML = g + '<svg width="7" height="8" viewBox="0 0 7 8" class="ms-1"><path d="M0 1h7"/><path d="M0 3h7L3.500 7z" fill="#333" stroke="none"/></svg>';
</script>
</body>
</html>
